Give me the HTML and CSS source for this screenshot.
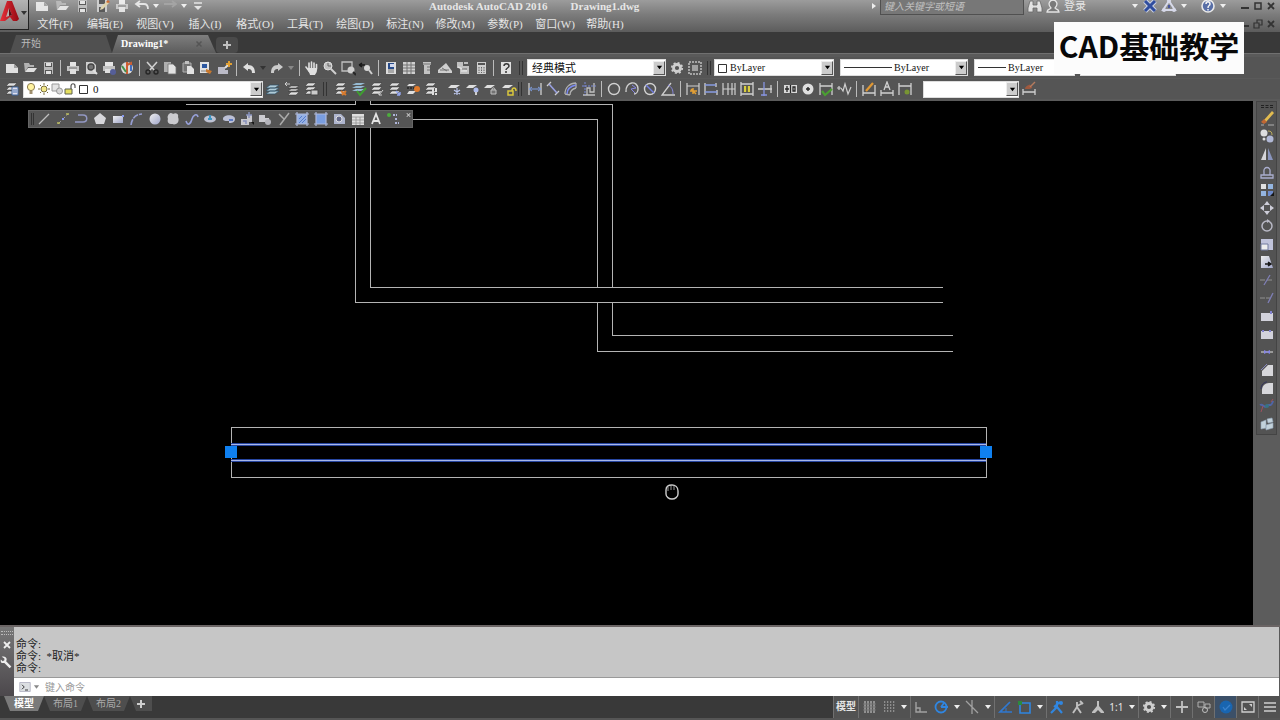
FILE: index.html
```html
<!DOCTYPE html>
<html lang="zh-CN">
<head>
<meta charset="utf-8">
<title>Autodesk AutoCAD 2016 - Drawing1.dwg</title>
<link rel="stylesheet" href="styles.css">
</head>
<body>
<svg class="sprite" aria-hidden="true">
  <defs>
    <linearGradient id="red" x1="0" x2="1"><stop offset="0" stop-color="#e8303a"/><stop offset="1" stop-color="#940a12"/></linearGradient>
    <linearGradient id="pale" x1="0" y1="0" x2="1" y2="1"><stop offset="0" stop-color="#fff"/><stop offset="1" stop-color="#a9b0d8"/></linearGradient>
  </defs>
  <symbol id="new" viewBox="0 0 16 16"><path d="M2 4h8l4 4v5H2z" fill="#f0f0f0"/><path d="M10 4v4h4z" fill="#a8a8a8"/></symbol>
  <symbol id="open" viewBox="0 0 16 16"><path d="M2 3h5l1 2h4v2H6l-3 5z" fill="#bdbdbd"/><path d="M6 8h9l-3 4H3z" fill="#eee"/></symbol>
  <symbol id="save" viewBox="0 0 16 16"><path d="M4 2h9v12H4z" fill="#c4c4c4"/><path d="M5 3h7v4H5zM5 10h7v4H5z" fill="#555"/><path d="M6 3h5v3H6zM6 11h5v3H6z" fill="#eee"/></symbol>
  <symbol id="saveas" viewBox="0 0 16 16"><path d="M3 2h10v12H3z" fill="#d4d4d4"/><path d="M5 2h6v4H5zM5 9h6v5H5z" fill="#555"/><path d="M7 9l6-6 2 2-6 6-3 1z" fill="#e8dcb0"/><path d="M12 4l2-2 2 2-2 1z" fill="#d86a2a"/></symbol>
  <symbol id="print" viewBox="0 0 16 16"><path d="M5 2h6v4H5z" fill="#f5f5f5"/><path d="M2 6h12v5H2z" fill="#cfcfcf"/><path d="M5 9h6v5H5z" fill="#eee"/><path d="M4 8h8" stroke="#777"/></symbol>
  <symbol id="preview" viewBox="0 0 16 16"><path d="M3 2h7l3 3v9H3z" fill="#ddd"/><circle cx="8" cy="7" r="3" fill="#777" stroke="#444" stroke-width="1.4"/><path d="M10 10l4 4" stroke="#eee" stroke-width="2"/></symbol>
  <symbol id="publish" viewBox="0 0 16 16"><path d="M4 2h8v4H4z" fill="#f5f5f5"/><path d="M2 6h12v5H2z" fill="#ccc"/><path d="M4 9h6v4H4z" fill="#eee"/><circle cx="12" cy="12" r="3" fill="#5560a0"/></symbol>
  <symbol id="globe" viewBox="0 0 16 16"><circle cx="8" cy="8" r="6" fill="#e8e8e8"/><path d="M8 2v12M8 5l4-2v8" stroke="#d86030" stroke-width="2" fill="none"/><path d="M3 6l4 6" stroke="#3f9a4a" stroke-width="2"/><path d="M12 5v6" stroke="#4170c8" stroke-width="2"/></symbol>
  <symbol id="cut" viewBox="0 0 16 16"><path d="M3 2l8 9M13 2l-8 9" stroke="#ddd" stroke-width="1.6"/><circle cx="4" cy="12" r="2" fill="none" stroke="#222" stroke-width="1.4"/><circle cx="12" cy="12" r="2" fill="none" stroke="#222" stroke-width="1.4"/></symbol>
  <symbol id="copy" viewBox="0 0 16 16"><path d="M2 2h7v10H2z" fill="#b8b8b8"/><path d="M6 4h5l3 3v7H6z" fill="#f2f2f2" stroke="#777" stroke-width=".8"/></symbol>
  <symbol id="paste" viewBox="0 0 16 16"><path d="M3 3h8v9H3z" fill="#777" stroke="#bbb"/><path d="M5 1h4v3H5z" fill="#ccc"/><path d="M7 6h4l3 3v5H7z" fill="#f2f2f2"/></symbol>
  <symbol id="match" viewBox="0 0 16 16"><path d="M2 2h9v11H2z" fill="#f2f2f2"/><path d="M4 4h5v4H4z" fill="#2858a8"/><path d="M3 11h6" stroke="#888"/><path d="M8 9l6 2-2 3-4-2z" fill="#d47c2a"/></symbol>
  <symbol id="block" viewBox="0 0 16 16"><path d="M2 7h7v3h3v4H2z" fill="#c6c6d4"/><path d="M9 8l3-3" stroke="#eee" stroke-width="2"/><path d="M13 1v6M10 4h6" stroke="#f0a830" stroke-width="2"/></symbol>
  <symbol id="undo" viewBox="0 0 16 16"><path d="M2 7l5-4v2c5 0 7 3 7 8h-3c0-3-1-4-4-4v2z" fill="#eee"/></symbol>
  <symbol id="redo" viewBox="0 0 16 16"><path d="M14 7L9 3v2c-5 0-7 3-7 8h3c0-3 1-4 4-4v2z" fill="#d8d8d8"/></symbol>
  <symbol id="undo2" viewBox="0 0 16 16"><path d="M6 3L2 6l4 3M3 6h7c3 0 4 2 4 5" fill="none" stroke="#eee" stroke-width="1.8"/></symbol>
  <symbol id="redo2" viewBox="0 0 16 16"><path d="M10 3l4 3-4 3M13 6H2" fill="none" stroke="#a6a6a6" stroke-width="1.8"/></symbol>
  <symbol id="caret" viewBox="0 0 8 8"><path d="M1 2h6L4 6z" fill="currentColor"/></symbol>
  <symbol id="qatmore" viewBox="0 0 16 16"><path d="M4 5h8" stroke="#eee" stroke-width="1.5"/><path d="M4 8h8l-4 4z" fill="#eee"/></symbol>
  <symbol id="hand" viewBox="0 0 16 16"><path d="M5 8V3M7.500 8V2M10 8V3M12.500 9V4.500M2 7l3 4" stroke="#f0f0f0" stroke-width="1.6" stroke-linecap="round"/><path d="M4 8h9v2c0 3-2 4-2 5H6c0-2-2-3-2-5z" fill="#f0f0f0"/></symbol>
  <symbol id="zoomrt" viewBox="0 0 16 16"><circle cx="6" cy="6" r="4" fill="#ccc" stroke="#eee"/><path d="M6 3v3h3" stroke="#666" fill="none"/><path d="M9 9l5 5" stroke="#ddd" stroke-width="2"/></symbol>
  <symbol id="zoomwin" viewBox="0 0 16 16"><path d="M2 2h10v9H2z" fill="none" stroke="#ccc" stroke-width="1.3"/><circle cx="11" cy="10" r="3.500" fill="#ddd"/><path d="M13 12l3 3" stroke="#222" stroke-width="2"/></symbol>
  <symbol id="zoomprev" viewBox="0 0 16 16"><path d="M1 5h6M1 5l3-2M1 5l3 2" stroke="#111" stroke-width="1.4"/><circle cx="9" cy="8" r="3" fill="#e4e4e4"/><path d="M11 10l3 4" stroke="#ddd" stroke-width="2"/></symbol>
  <symbol id="props" viewBox="0 0 16 16"><path d="M3 2h10v12H3z" fill="#ececec"/><path d="M5 3h6v6H5z" fill="#234a90"/><path d="M7 4h4v3H7z" fill="#dfe7ff"/><path d="M5 10h6M5 12h6" stroke="#777"/></symbol>
  <symbol id="design" viewBox="0 0 16 16"><path d="M2 2h12v12H2z" fill="#ddd"/><path d="M6 2v12M10 2v12M2 5h12M2 8h12M2 11h12" stroke="#777"/></symbol>
  <symbol id="palette" viewBox="0 0 16 16"><path d="M4 2h8v3h-1v9H5V5H4z" fill="#d0d0d0"/><path d="M4 4h8M8 7h3M8 10h3" stroke="#777"/></symbol>
  <symbol id="sheet" viewBox="0 0 16 16"><path d="M1 10l8-7 3 4 3 4v2H1z" fill="#ddd"/><path d="M3 10h9M5 8l5 3" stroke="#777"/></symbol>
  <symbol id="markup" viewBox="0 0 16 16"><path d="M2 2h6v4h6v8H5V8H2z" fill="#ccc"/><path d="M9 3h4M3 7l9 4M6 11h6" stroke="#eee" stroke-width="1.5"/><path d="M7 9h5" stroke="#666"/></symbol>
  <symbol id="calc" viewBox="0 0 16 16"><path d="M4 2h9v12H4z" fill="#ddd"/><path d="M5 4h7" stroke="#555" stroke-width="2"/><path d="M6 7v6M8.500 7v6M11 7v6" stroke="#666" stroke-dasharray="1.500 1"/></symbol>
  <symbol id="help" viewBox="0 0 16 16"><path d="M3 2h10v12H3z" fill="#eee"/><path d="M6 6c0-3 5-3 5 0 0 2-3 2-3 4M8 11v2" fill="none" stroke="#333" stroke-width="1.5"/></symbol>
  <symbol id="gear" viewBox="0 0 16 16"><circle cx="8" cy="8" r="3.500" fill="none" stroke="#ddd" stroke-width="2.800"/><circle cx="8" cy="8" r="5.200" fill="none" stroke="#ddd" stroke-width="1.800" stroke-dasharray="2 2.080"/></symbol>
  <symbol id="wsave" viewBox="0 0 16 16"><path d="M2 2h12v12H2z" fill="none" stroke="#ccc" stroke-width="1.500" stroke-dasharray="2 1"/><path d="M5 5h6v6H5z" fill="#aaa"/></symbol>
  <symbol id="layers" viewBox="0 0 16 16"><path d="M5 2h8l-3 3H2zM5 6h8l-3 3H2zM5 10h8l-3 3H2z" fill="#eee" stroke="#333" stroke-width=".5"/></symbol>
  <symbol id="layprop" viewBox="0 0 16 16"><use href="#layers"/><path d="M8 6h6v8H8z" fill="#eef" stroke="#3c69a5"/><path d="M9 9h4M9 11h4" stroke="#4a78b8"/></symbol>
  <symbol id="laycur" viewBox="0 0 16 16"><path d="M5 4h9l-4 3H1zM5 7h9l-4 3H1zM5 10h9l-4 3H1z" fill="#b9d8e6" stroke="#2c5068" stroke-width=".7"/></symbol>
  <symbol id="layprev" viewBox="0 0 16 16"><path d="M7 5h8l-3 2H4zM7 8h8l-3 2H4zM7 11h8l-3 3H4z" fill="#eee" stroke="#333" stroke-width=".5"/><path d="M1 3h5M1 3l2-2M1 3l2 2" stroke="#ddd"/></symbol>
  <symbol id="laystate" viewBox="0 0 16 16"><use href="#layers"/><path d="M8 9h7v5H8z" fill="#d8d8d8" stroke="#444"/></symbol>
  <symbol id="layorange" viewBox="0 0 16 16"><use href="#layers"/><path d="M8 10l5 4M13 10l-4 4" stroke="#e8802a" stroke-width="2"/></symbol>
  <symbol id="laycheck" viewBox="0 0 16 16"><path d="M5 2h9l-4 2H1zM5 5h9l-4 2H1zM5 8h9l-4 2H1z" fill="#9cc5e0"/><path d="M6 10l3 4 6-7" fill="none" stroke="#3ca82c" stroke-width="2"/></symbol>
  <symbol id="layarrow" viewBox="0 0 16 16"><use href="#layers"/><path d="M14 9l-4 5M10 14v-3M10 14h3" stroke="#ddd"/></symbol>
  <symbol id="layblue" viewBox="0 0 16 16"><use href="#layers"/><path d="M9 10l4 4M13 14v-3M13 14h-3" stroke="#9cb0ff" stroke-width="1.400"/></symbol>
  <symbol id="layiso" viewBox="0 0 16 16"><path d="M4 3h7L8 5H2zM4 10h7l-3 3H2z" fill="#eee"/><path d="M2 7h8" stroke="#222" stroke-width="1.500" stroke-dasharray="2 1"/><circle cx="12" cy="8" r="3" fill="#f07f28"/></symbol>
  <symbol id="laywalk" viewBox="0 0 16 16"><use href="#layers"/><path d="M10 7v7M13 7v7" stroke="#eee" stroke-width="2" stroke-dasharray="4 1"/></symbol>
  <symbol id="layfrz" viewBox="0 0 16 16"><path d="M4 4h9l-4 3H1z" fill="#eee"/><path d="M10 7v7M7 9l6 4M13 9l-6 4" stroke="#c8d4ff" stroke-width="1.200"/></symbol>
  <symbol id="layoff" viewBox="0 0 16 16"><path d="M4 4h8l-4 3H1z" fill="#eee"/><circle cx="11" cy="9" r="2.500" fill="#b8c8ff"/><path d="M11 11v3" stroke="#ddd" stroke-width="2"/></symbol>
  <symbol id="laylock" viewBox="0 0 16 16"><path d="M4 4h8l-4 3H1z" fill="#eee"/><path d="M8 9h5v4H8zM9 9c0-3 3-3 3 0" fill="#777" stroke="#ccc"/></symbol>
  <symbol id="layunlock" viewBox="0 0 16 16"><path d="M4 4h8l-4 3H1z" fill="#eee"/><path d="M7 10h5v4H7zM11 10c0-4 4-4 4 0" fill="none" stroke="#e8d43a" stroke-width="1.500"/></symbol>
  <symbol id="bulb" viewBox="0 0 12 14"><circle cx="6" cy="5" r="3.600" fill="#fff3a0" stroke="#8a7a50"/><path d="M4.500 9h3v3h-3z" fill="#a09070"/></symbol>
  <symbol id="sun" viewBox="0 0 12 14"><circle cx="6" cy="7" r="3" fill="#f3e788" stroke="#7a7040"/><path d="M6 1v2M6 11v2M0 7h2M10 7h2M2 3l1 1M9 10l1 1M10 3L9 4M3 10l-1 1" stroke="#7a7040"/></symbol>
  <symbol id="vpfrz" viewBox="0 0 12 14"><path d="M1 2h7v7H1z" fill="#e4e4e4" stroke="#999"/><circle cx="8.500" cy="9" r="3" fill="#d8d8d8" stroke="#999"/></symbol>
  <symbol id="lock" viewBox="0 0 12 14"><path d="M1 7h7v5H1z" fill="#e6e060" stroke="#5c6050"/><path d="M7 7V4c0-3 4-3 4 0v2" fill="none" stroke="#555" stroke-width="1.200"/></symbol>
  <symbol id="swatch" viewBox="0 0 12 14"><path d="M2.500 3.500h8v8h-8z" fill="#fff" stroke="#333"/></symbol>
  <symbol id="dlin" viewBox="0 0 16 16"><path d="M2 2v12M14 2v12" stroke="#ddd" stroke-width="1.300"/><path d="M2 8h12M2 8l3-2M2 8l3 2M14 8l-3-2M14 8l-3 2" stroke="#86a8f0" fill="none"/></symbol>
  <symbol id="dali" viewBox="0 0 16 16"><path d="M2 5l4-4M10 14l4-4" stroke="#ddd" stroke-width="1.300"/><path d="M4 3l8 9" stroke="#a0a8f0" stroke-width="1.600"/></symbol>
  <symbol id="darc" viewBox="0 0 16 16"><path d="M2 13C2 6 7 2 13 2M7 14c0-4 2-6 6-7M2 13l5 1M13 2v5" fill="none" stroke="#bbb" stroke-width="1.300"/><path d="M4 13C4 8 8 5 13 4" fill="none" stroke="#8090ff" stroke-width="1.500"/></symbol>
  <symbol id="dord" viewBox="0 0 16 16"><path d="M2 14h12M6 14V7h3v4h4V2" fill="none" stroke="#ccc" stroke-width="1.300"/><path d="M1 5h14M4 1v13" stroke="#8090e8" stroke-dasharray="2 1"/></symbol>
  <symbol id="circ" viewBox="0 0 16 16"><circle cx="8" cy="8" r="5.500" fill="none" stroke="#e0e0e0" stroke-width="1.400"/></symbol>
  <symbol id="djog" viewBox="0 0 16 16"><path d="M2 11c-1-11 12-12 12-3 0 3-2 5-4 5" fill="none" stroke="#ddd" stroke-width="1.400"/><path d="M8 4l4 3-5 1 4 4" fill="none" stroke="#8c8cf0"/></symbol>
  <symbol id="ddia" viewBox="0 0 16 16"><use href="#circ"/><path d="M4 4l8 8" stroke="#7784f0" stroke-width="1.500"/></symbol>
  <symbol id="dang" viewBox="0 0 16 16"><path d="M15 14H2L11 2" fill="none" stroke="#ddd" stroke-width="1.300"/><path d="M8 4c4 2 5 5 5 9" stroke="#9090ee" fill="none"/></symbol>
  <symbol id="dquick" viewBox="0 0 16 16"><path d="M2 2v12M14 2v12M2 5h12" stroke="#ddd" stroke-width="1.200"/><path d="M8 7v6M5 10h7M6 8l5 5" stroke="#f2a832" stroke-width="1.500"/></symbol>
  <symbol id="dbase" viewBox="0 0 16 16"><path d="M2 2v12M13 2v4M14 9v5" stroke="#ddd" stroke-width="1.300"/><path d="M2 4h11M2 11h12" stroke="#8fa4f2" stroke-width="1.400"/></symbol>
  <symbol id="dcont" viewBox="0 0 16 16"><path d="M2 2v12M7 2v12M11 2v12M14 2v12M2 8h12" stroke="#ddd" stroke-width="1.200"/></symbol>
  <symbol id="dspace" viewBox="0 0 16 16"><path d="M2 1v14M14 1v14M2 3h12M2 13h12" stroke="#ddd" stroke-width="1.300"/><path d="M5 5h6v6H5z" fill="#e8dc3c"/><path d="M8 5v6" stroke="#444" stroke-width="1.500"/></symbol>
  <symbol id="dbreak" viewBox="0 0 16 16"><path d="M1 8h14M14 4v8" stroke="#ddd" stroke-width="1.300"/><path d="M7 1v14M4 14h6" stroke="#8d9cf0" stroke-width="1.300"/></symbol>
  <symbol id="tol" viewBox="0 0 16 16"><path d="M2 4h13v8H2z" fill="#e8e8e8"/><path d="M5 5v6M3 8h4M8.500 4v8M11 6h2v4h-2z" stroke="#222" fill="none" stroke-width="1.300"/></symbol>
  <symbol id="cmark" viewBox="0 0 16 16"><circle cx="8" cy="8" r="5.500" fill="#eee"/><path d="M8 6v4M6 8h4" stroke="#222" stroke-width="1.400"/></symbol>
  <symbol id="dinsp" viewBox="0 0 16 16"><path d="M2 2v12M14 2v12M2 5h12" stroke="#ddd" stroke-width="1.300"/><path d="M4 10l3 4 7-6" fill="none" stroke="#49a82e" stroke-width="2.200"/></symbol>
  <symbol id="djl" viewBox="0 0 16 16"><path d="M1 7h4M3 5v4M5 7l2 3 2-7 3 10 3-7" fill="none" stroke="#ddd" stroke-width="1.200"/></symbol>
  <symbol id="dedit" viewBox="0 0 16 16"><path d="M2 4v11M14 4v11M2 12h12" stroke="#ddd" stroke-width="1.300"/><path d="M5 10l7-8" stroke="#f0a030" stroke-width="2.200"/></symbol>
  <symbol id="dtext" viewBox="0 0 16 16"><path d="M2 9v6M14 9v6M2 12h12M5 9l3-8 3 8M6 6h4" fill="none" stroke="#ddd" stroke-width="1.300"/></symbol>
  <symbol id="dupd" viewBox="0 0 16 16"><path d="M2 2v12M14 2v12M2 5h12" stroke="#ddd" stroke-width="1.300"/><circle cx="10" cy="11" r="2.500" fill="#7c9c30"/></symbol>
  <symbol id="dstyle" viewBox="0 0 16 16"><path d="M2 8v6M14 8v6M2 11h12" stroke="#ddd" stroke-width="1.300"/><path d="M6 8c0-2 3-2 4-3" stroke="#a85a3c" stroke-width="4" fill="none"/><path d="M9 6l5-5" stroke="#c08060" stroke-width="1.500"/></symbol>
  <symbol id="line" viewBox="0 0 16 16"><path d="M3 13L13 3" stroke="#ccc" stroke-width="1.300"/></symbol>
  <symbol id="xline" viewBox="0 0 16 16"><path d="M3 13L13 3" stroke="#aaa" stroke-dasharray="4 2"/><path d="M2 12h3M11 3h3" stroke="#c8c860" stroke-width="1.500"/><path d="M7 7h2v2H7z" fill="#8da0ff"/></symbol>
  <symbol id="pline" viewBox="0 0 16 16"><path d="M5 4h5c5 0 5 7 0 7H2" fill="none" stroke="#9aa0d0" stroke-width="1.500"/></symbol>
  <symbol id="poly" viewBox="0 0 16 16"><path d="M8 2l6 5-2 6H4L2 7z" fill="#e6e6ea"/></symbol>
  <symbol id="rect" viewBox="0 0 16 16"><path d="M3 5h10v7H3z" fill="url(#pale)"/><path d="M12 4h2v2h-2z" fill="#8da0ff"/></symbol>
  <symbol id="arc" viewBox="0 0 16 16"><path d="M2 14C3 7 7 3 13 3" fill="none" stroke="#9ea6e0" stroke-width="1.600" stroke-dasharray="6 1"/></symbol>
  <symbol id="disc" viewBox="0 0 16 16"><circle cx="8" cy="8" r="5.500" fill="url(#pale)"/></symbol>
  <symbol id="cloud" viewBox="0 0 16 16"><path d="M4 3c2-2 4 0 4 0 3-2 6 0 5 3 1 2 1 6-2 7-2 1-4 0-5 0-3 0-4-3-3-5-1-2 0-4 1-5z" fill="#d7d7dc"/></symbol>
  <symbol id="spline" viewBox="0 0 16 16"><path d="M2 10c2 6 5 2 6-2s5-6 6-2" fill="none" stroke="#a0aae8" stroke-width="1.600"/></symbol>
  <symbol id="ellipse" viewBox="0 0 16 16"><ellipse cx="8" cy="8" rx="6" ry="3.500" fill="#c9cee2"/><path d="M6 8h4M8 4v3" stroke="#3c9acc" stroke-width="2"/></symbol>
  <symbol id="earc" viewBox="0 0 16 16"><path d="M2 8c0-5 12-5 12 0 0 4-4 4-6 4v-2C5 10 2 10 2 8z" fill="#c8cce4"/><path d="M8 9h4" stroke="#6080d0" stroke-width="2"/></symbol>
  <symbol id="insert" viewBox="0 0 16 16"><path d="M2 8h6V4h5v7h-3v3H2z" fill="#d4d4da"/><path d="M10 1v6M7 4h6M4 10h3v3" stroke="#8d98c8" stroke-width="1.500" fill="none"/><path d="M12 11h3v3" fill="#111"/></symbol>
  <symbol id="mkblock" viewBox="0 0 16 16"><path d="M2 4h6v3h4v4H2z" fill="#d8d8de"/><circle cx="11" cy="11" r="3" fill="#c0c0c8"/></symbol>
  <symbol id="point" viewBox="0 0 16 16"><path d="M3 3l5 5M13 2L4 14" stroke="#b4b4b4" stroke-width="1.500"/></symbol>
  <symbol id="hatch" viewBox="0 0 16 16"><path d="M3 3h10v10H3z" fill="#9cbcf4"/><path d="M3 1v14M13 1v14M1 3h14M1 13h14" stroke="#b8c4e8" stroke-width="1.200"/><path d="M5 8l3-3M5 12l7-7M8 12l4-4" stroke="#5580d8"/></symbol>
  <symbol id="gradient" viewBox="0 0 16 16"><path d="M3 3h10v10H3z" fill="#7fa6f0"/><path d="M3 1v14M13 1v14M1 3h14M1 13h14" stroke="#b8c4e8" stroke-width="1.200"/></symbol>
  <symbol id="region" viewBox="0 0 16 16"><path d="M3 3h7l4 4v6H3z" fill="#b8c0dc"/><circle cx="8" cy="8" r="3" fill="#666c90" stroke="#eee"/></symbol>
  <symbol id="table" viewBox="0 0 16 16"><path d="M2 3h12v11H2z" fill="#eee"/><path d="M2 6h12M2 9h12M2 12h12M6 6v8M10 6v8" stroke="#999" stroke-width=".8"/></symbol>
  <symbol id="mtext" viewBox="0 0 16 16"><path d="M4 13L8 3l4 10M5 10h6" fill="none" stroke="#f4f4f4" stroke-width="1.800"/></symbol>
  <symbol id="addsel" viewBox="0 0 16 16"><circle cx="3" cy="4" r="2" fill="#4cb83a"/><path d="M7 4h4M10 7v3M9 12h4" stroke="#b8c0e8" stroke-dasharray="2 1" fill="none" stroke-width="2"/></symbol>
  <symbol id="erase" viewBox="0 0 16 16"><path d="M5 10l8-9 2 2-8 9z" fill="#f2c850"/><path d="M2 12l3-3 3 3-3 2z" fill="#cc6a30"/><path d="M2 15h3M9 15h6" stroke="#bbb"/></symbol>
  <symbol id="mcopy" viewBox="0 0 16 16"><circle cx="5" cy="5" r="3.500" fill="#eee"/><circle cx="11" cy="11" r="3.500" fill="#bcc4e4"/><path d="M9 3c3 0 4 1 4 4" stroke="#c8b860" fill="none"/><circle cx="5" cy="11" r="1.500" fill="#eee"/></symbol>
  <symbol id="mirror" viewBox="0 0 16 16"><path d="M7 2v12H2z" fill="#e4e4e8"/><path d="M9 2v12h5z" fill="#8f9cc8"/></symbol>
  <symbol id="offset" viewBox="0 0 16 16"><path d="M2 14h12v-3h-3V8c1-6-7-6-6 0v3H2zM2 11h12" fill="none" stroke="#b4b8dc" stroke-width="1.300"/></symbol>
  <symbol id="array" viewBox="0 0 16 16"><path d="M2 2h5v5H2z" fill="#f0f0f0"/><path d="M9 2h5v5H9zM2 9h5v5H2z" fill="#9cc0f0"/><path d="M9 9h5v5H9z" fill="#7090d8"/><path d="M11 14l4-4v4z" fill="#111"/></symbol>
  <symbol id="move" viewBox="0 0 16 16"><path d="M8 1l3 4H5zM8 15l3-4H5zM1 8l4-3v6zM15 8l-4-3v6z" fill="#dcdce8"/></symbol>
  <symbol id="rotate" viewBox="0 0 16 16"><circle cx="8" cy="8" r="5" fill="none" stroke="#c4c4d2" stroke-width="1.500"/><path d="M8 1l3 2-3 2z" fill="#c4c4d2"/></symbol>
  <symbol id="scale" viewBox="0 0 16 16"><path d="M2 3h12v11H2z" fill="#ccd0ea"/><path d="M2 8h7v6H2z" fill="#fff" stroke="#7780a8"/></symbol>
  <symbol id="stretch" viewBox="0 0 16 16"><path d="M2 2h8l4 12H2z" fill="url(#pale)"/><path d="M6 10h5M9 8l3 2-3 2" stroke="#111" stroke-width="1.500" fill="#111"/></symbol>
  <symbol id="trim" viewBox="0 0 16 16"><path d="M1 8h14" stroke="#999" stroke-dasharray="5 2"/><path d="M5 13l6-10" stroke="#8484c0" stroke-width="1.300"/></symbol>
  <symbol id="extend" viewBox="0 0 16 16"><path d="M1 8h10" stroke="#999" stroke-dasharray="5 1"/><path d="M9 13l5-10" stroke="#8484c0" stroke-width="1.300"/></symbol>
  <symbol id="brkpt" viewBox="0 0 16 16"><path d="M2 5h12v8H2z" fill="#e0e0ea"/><path d="M11 3h2v3h-2z" fill="#8888dc"/></symbol>
  <symbol id="brk" viewBox="0 0 16 16"><path d="M2 5h12v8H2z" fill="#e0e0ea"/><path d="M3 4h2v2H3zM10 4h2v2h-2z" fill="#8888dc"/></symbol>
  <symbol id="join" viewBox="0 0 16 16"><path d="M2 8h12" stroke="#ccc" stroke-width="1.300"/><path d="M5 6l4 2-4 2zM11 6L7 8l4 2z" fill="#8c8cf0"/></symbol>
  <symbol id="chamfer" viewBox="0 0 16 16"><path d="M3 9l6-6h5v11H3z" fill="#e6e6ea"/><path d="M2 8l6-6" stroke="#8c8cc8"/></symbol>
  <symbol id="fillet" viewBox="0 0 16 16"><path d="M3 14V10c0-4 3-7 7-7h4v11z" fill="#e6e6ea"/><path d="M2 9c0-4 3-7 6-7" fill="none" stroke="#303060"/></symbol>
  <symbol id="blend" viewBox="0 0 16 16"><path d="M1 7c3-2 4 4 7 1s4 2 6-5" fill="none" stroke="#5068b0" stroke-width="2"/><path d="M2 14l2-6M12 4l2-3" stroke="#a85060"/><circle cx="8" cy="8" r="2" fill="#357888"/></symbol>
  <symbol id="explode" viewBox="0 0 16 16"><path d="M2 6l5-2v8l-5 1zM8 3l5-1 1 4-5 1zM7 9l7-2v5l-7 2z" fill="#cfe0ea" stroke="#9ab0c4" stroke-width=".6"/></symbol>
  <symbol id="plus" viewBox="0 0 16 16"><path d="M8 4v8M4 8h8" stroke="currentColor" stroke-width="2"/></symbol>
  <symbol id="bigplus" viewBox="0 0 16 16"><path d="M8 2v12M2 8h12" stroke="#ccc" stroke-width="1.800"/></symbol>
  <symbol id="bino" viewBox="0 0 16 16"><path d="M3 3h3v4h4V3h3l2 7v4h-5v-4H6v4H1v-4z" fill="#ececec" stroke="#666" stroke-width=".8"/></symbol>
  <symbol id="person" viewBox="0 0 16 16"><path d="M2 14c0-3 4-3 4-4-4-4-1-8 2-8s6 4 2 8c0 1 4 1 4 4z" fill="#777" stroke="#eee" stroke-width="1.300"/></symbol>
  <symbol id="exch" viewBox="0 0 16 16"><path d="M3 3l10 10M13 3L3 13" stroke="#d4dcf0" stroke-width="5"/><path d="M3 3l10 10M13 3L3 13" stroke="#2747a0" stroke-width="3"/></symbol>
  <symbol id="a360" viewBox="0 0 16 16"><path d="M8 3l6 9H2z" fill="none" stroke="#dfe2f4" stroke-width="2"/><circle cx="8" cy="3" r="2" fill="#dfe2f4"/><circle cx="3" cy="12" r="2" fill="#dfe2f4"/><circle cx="13" cy="12" r="2" fill="#dfe2f4"/><path d="M8 7v3" stroke="#4050a0" stroke-width="2"/></symbol>
  <symbol id="qhelp" viewBox="0 0 16 16"><circle cx="8" cy="8" r="6" fill="#536caa" stroke="#f4f4f4" stroke-width="1.600"/><path d="M6 6c0-3 4-3 4 0 0 2-2 1-2 4M8 11v1.500" fill="none" stroke="#fff" stroke-width="1.500"/></symbol>
  <symbol id="min" viewBox="0 0 12 12"><path d="M2 8h8" stroke="#333" stroke-width="2"/></symbol>
  <symbol id="max" viewBox="0 0 12 12"><path d="M3 3h6v6H3z" fill="none" stroke="#333" stroke-width="1.500"/></symbol>
  <symbol id="restore" viewBox="0 0 12 12"><path d="M2 5h5v5H2zM5 5V2h5v5H7" fill="none" stroke="#333" stroke-width="1.200"/></symbol>
  <symbol id="close" viewBox="0 0 12 12"><path d="M3 3l6 6M9 3L3 9" stroke="currentColor" stroke-width="1.800"/></symbol>
  <symbol id="wrench" viewBox="0 0 16 16"><path d="M2 2c4-1 7 2 5 5l6 6-2 2-6-6c-3 1-5-1-4-4l2 2 2-1 0-2z" fill="#eee"/></symbol>
  <symbol id="grid1" viewBox="0 0 16 16"><path d="M4 2v12M7 2v12M10 2v12M13 2v12" stroke="#ddd"/><path d="M2 5h13M2 8h13M2 11h13" stroke="#777"/></symbol>
  <symbol id="grid2" viewBox="0 0 16 16"><path d="M3 3h11M3 6h11M3 9h11M3 12h11" stroke="#aaa" stroke-dasharray="1.300 1.700" stroke-width="1.300"/></symbol>
  <symbol id="ortho" viewBox="0 0 16 16"><path d="M3 3v10h11M3 9h4v4" fill="none" stroke="#aaa" stroke-width="1.400"/></symbol>
  <symbol id="polar" viewBox="0 0 16 16"><circle cx="8" cy="8" r="5.500" fill="none" stroke="#2d8cf0" stroke-width="1.800"/><path d="M8 8h7M8 8l3-4" stroke="#2d8cf0" stroke-width="1.800"/></symbol>
  <symbol id="iso" viewBox="0 0 16 16"><path d="M2 2l12 12M8 1v14" stroke="#aaa" stroke-width="1.300"/></symbol>
  <symbol id="otrack" viewBox="0 0 16 16"><path d="M13 3L3 13h12" fill="none" stroke="#2d7ee0" stroke-width="1.700"/><path d="M9 9v4" stroke="#2d7ee0"/></symbol>
  <symbol id="osnap" viewBox="0 0 16 16"><path d="M3 4h10v10H3z" fill="none" stroke="#2d8cf0" stroke-width="1.600"/><path d="M1 2h4v4H1z" fill="#28913a"/></symbol>
  <symbol id="ann1" viewBox="0 0 16 16"><path d="M8 2v7M8 8l-6 6M8 8l5 6M5 8l6-5" stroke="#2d8cf0" stroke-width="2.200"/><circle cx="12" cy="4" r="2" fill="#2d8cf0"/></symbol>
  <symbol id="ann2" viewBox="0 0 16 16"><path d="M7 3v6M7 8l-4 6M7 8l4 6M7 7l6-3M10 2l3 3" stroke="#ccc" stroke-width="1.900"/></symbol>
  <symbol id="ann3" viewBox="0 0 16 16"><path d="M7 2h2v5l5 6v1h-3L8 11l-3 3H2v-1l5-6z" fill="#ccc"/></symbol>
  <symbol id="monitor" viewBox="0 0 16 16"><path d="M2 3h6v5H2z" fill="none" stroke="#bbb"/><path d="M9 5h5v4H9z" fill="none" stroke="#bbb"/><circle cx="9" cy="11" r="2.500" fill="none" stroke="#ccc"/></symbol>
  <symbol id="perf" viewBox="0 0 16 16"><circle cx="8" cy="8" r="6.500" fill="#1668b8"/><path d="M5 8l2 3 5-5" fill="none" stroke="#3a88d8" stroke-width="1.300"/></symbol>
  <symbol id="full" viewBox="0 0 16 16"><path d="M2 3h12v10H2z" fill="none" stroke="#ddd" stroke-width="1.300"/><path d="M4 8v3h3zM12 8V5H9z" fill="#ddd"/></symbol>
  <symbol id="menu" viewBox="0 0 16 16"><path d="M2 4h12M2 8h12M2 12h12" stroke="#ddd" stroke-width="1.700"/></symbol>
  <symbol id="prompt" viewBox="0 0 16 16"><path d="M1 2h14v12H1z" fill="#dcdfe2" stroke="#aab"/><path d="M4 5l3 3-3 3M8 12h4" fill="none" stroke="#333" stroke-width="1.300"/></symbol>
</svg>

<div class="app">
  <header class="header">
    <button class="app-button" aria-label="应用程序菜单">
      <svg class="logo" viewBox="0 0 20 22"><path d="M7 1h5l7 18-2 2h-4l-3-4-5 4H0z" fill="url(#red)"/><path d="M9 8l3 7-6 2z" fill="#b8b0b0"/><path d="M9 8l3 7-3 1z" fill="#5c0a10"/></svg>
      <svg class="tiny dark"><use href="#caret"/></svg>
    </button>
    <div class="header-rows">
      <div class="title-row">
        <div class="qat">
          <button aria-label="新建"><svg class="ic"><use href="#new"/></svg></button>
          <button aria-label="打开"><svg class="ic"><use href="#open"/></svg></button>
          <button aria-label="保存"><svg class="ic"><use href="#save"/></svg></button>
          <button aria-label="另存为"><svg class="ic"><use href="#saveas"/></svg></button>
          <button aria-label="打印"><svg class="ic"><use href="#print"/></svg></button>
          <button aria-label="放弃"><svg class="ic"><use href="#undo2"/></svg></button>
          <svg class="tiny"><use href="#caret"/></svg>
          <button aria-label="重做"><svg class="ic"><use href="#redo2"/></svg></button>
          <svg class="tiny"><use href="#caret"/></svg>
          <button aria-label="自定义"><svg class="ic"><use href="#qatmore"/></svg></button>
        </div>
        <h1 class="title"><span>Autodesk AutoCAD 2016</span><span>Drawing1.dwg</span></h1>
        <svg class="tiny expand"><use href="#caret"/></svg>
        <input class="search" type="text" placeholder="键入关键字或短语" aria-label="搜索">
        <div class="account">
          <button aria-label="查找"><svg class="ic"><use href="#bino"/></svg></button>
          <button class="login"><svg class="ic"><use href="#person"/></svg>登录</button>
        </div>
        <div class="services">
          <svg class="tiny"><use href="#caret"/></svg>
          <button aria-label="Exchange"><svg class="ic"><use href="#exch"/></svg></button>
          <button aria-label="A360"><svg class="ic"><use href="#a360"/></svg></button>
          <svg class="tiny"><use href="#caret"/></svg>
        </div>
        <div class="services">
          <button aria-label="帮助"><svg class="ic"><use href="#qhelp"/></svg></button>
          <svg class="tiny"><use href="#caret"/></svg>
        </div>
        <div class="win">
          <button aria-label="最小化"><svg><use href="#min"/></svg></button>
          <button aria-label="最大化"><svg><use href="#max"/></svg></button>
          <button aria-label="关闭"><svg><use href="#close"/></svg></button>
        </div>
      </div>
      <nav class="menu-row">
        <button>文件(F)</button><button>编辑(E)</button><button>视图(V)</button><button>插入(I)</button><button>格式(O)</button><button>工具(T)</button><button>绘图(D)</button><button>标注(N)</button><button>修改(M)</button><button>参数(P)</button><button>窗口(W)</button><button>帮助(H)</button>
        <div class="win">
          <button aria-label="最小化图形"><svg><use href="#min"/></svg></button>
          <button aria-label="还原图形"><svg><use href="#restore"/></svg></button>
          <button aria-label="关闭图形"><svg><use href="#close"/></svg></button>
        </div>
      </nav>
    </div>
    <div class="banner">CAD基础教学</div>
  </header>

  <div class="file-tabs">
    <button class="file-tab">开始</button>
    <button class="file-tab active">Drawing1*<svg class="tabx"><use href="#close"/></svg></button>
    <button class="add-tab" aria-label="新图形"><svg class="ic"><use href="#plus"/></svg></button>
  </div>

  <div class="toolbars">
    <div class="bar">
      <div class="tools standard">
        <button aria-label="新建"><svg class="ic"><use href="#new"/></svg></button>
        <button aria-label="打开"><svg class="ic"><use href="#open"/></svg></button>
        <button aria-label="保存"><svg class="ic"><use href="#save"/></svg></button>
        <i class="sep"></i>
        <button aria-label="打印"><svg class="ic"><use href="#print"/></svg></button>
        <button aria-label="打印预览"><svg class="ic"><use href="#preview"/></svg></button>
        <button aria-label="发布"><svg class="ic"><use href="#publish"/></svg></button>
        <button aria-label="三维打印"><svg class="ic"><use href="#globe"/></svg></button>
        <i class="sep"></i>
        <button aria-label="剪切"><svg class="ic"><use href="#cut"/></svg></button>
        <button aria-label="复制"><svg class="ic"><use href="#copy"/></svg></button>
        <button aria-label="粘贴"><svg class="ic"><use href="#paste"/></svg></button>
        <button aria-label="特性匹配"><svg class="ic"><use href="#match"/></svg></button>
        <button aria-label="块编辑器"><svg class="ic"><use href="#block"/></svg></button>
        <i class="sep"></i>
        <button aria-label="放弃"><svg class="ic"><use href="#undo"/></svg></button>
        <svg class="tiny dark"><use href="#caret"/></svg>
        <button aria-label="重做"><svg class="ic"><use href="#redo"/></svg></button>
        <svg class="tiny dim"><use href="#caret"/></svg>
        <i class="sep"></i>
        <button aria-label="平移"><svg class="ic"><use href="#hand"/></svg></button>
        <button aria-label="实时缩放"><svg class="ic"><use href="#zoomrt"/></svg></button>
        <button aria-label="窗口缩放"><svg class="ic"><use href="#zoomwin"/></svg></button>
        <button aria-label="缩放上一个"><svg class="ic"><use href="#zoomprev"/></svg></button>
        <i class="sep"></i>
        <button aria-label="特性"><svg class="ic"><use href="#props"/></svg></button>
        <button aria-label="设计中心"><svg class="ic"><use href="#design"/></svg></button>
        <button aria-label="工具选项板"><svg class="ic"><use href="#palette"/></svg></button>
        <button aria-label="图纸集"><svg class="ic"><use href="#sheet"/></svg></button>
        <button aria-label="标记集"><svg class="ic"><use href="#markup"/></svg></button>
        <button aria-label="计算器"><svg class="ic"><use href="#calc"/></svg></button>
        <i class="sep"></i>
        <button aria-label="帮助"><svg class="ic"><use href="#help"/></svg></button>
      </div>
      <i class="grip"></i>
      <div class="combo space"><select aria-label="工作空间"><option>经典模式</option></select><span class="arrow"><svg><use href="#caret"/></svg></span></div>
      <div class="tools">
        <button aria-label="工作空间设置"><svg class="ic"><use href="#gear"/></svg></button>
        <button aria-label="我的工作空间"><svg class="ic"><use href="#wsave"/></svg></button>
      </div>
      <i class="grip"></i>
      <div class="combo bylayer color"><svg class="mini"><use href="#swatch"/></svg><select aria-label="颜色"><option>ByLayer</option></select><span class="arrow"><svg><use href="#caret"/></svg></span></div>
      <div class="combo bylayer ltype"><span class="rule"></span><select aria-label="线型"><option>ByLayer</option></select><span class="arrow"><svg><use href="#caret"/></svg></span></div>
      <div class="combo bylayer lweight"><span class="rule short"></span><select aria-label="线宽"><option>ByLayer</option></select></div>
      <div class="combo plot"></div>
    </div>
    <div class="bar">
      <div class="tools"><button aria-label="图层特性"><svg class="ic"><use href="#layprop"/></svg></button></div>
      <div class="combo layer">
        <svg class="mini"><use href="#bulb"/></svg><svg class="mini"><use href="#sun"/></svg><svg class="mini"><use href="#vpfrz"/></svg><svg class="mini"><use href="#lock"/></svg><svg class="mini"><use href="#swatch"/></svg>
        <select aria-label="图层"><option>0</option></select><span class="arrow"><svg><use href="#caret"/></svg></span>
      </div>
      <div class="tools current">
        <button aria-label="置为当前"><svg class="ic"><use href="#laycur"/></svg></button>
        <button aria-label="上一个图层"><svg class="ic"><use href="#layprev"/></svg></button>
        <button aria-label="图层状态"><svg class="ic"><use href="#laystate"/></svg></button>
      </div>
      <i class="grip"></i>
      <div class="tools layers2">
        <button aria-label="图层匹配"><svg class="ic"><use href="#layorange"/></svg></button>
        <button aria-label="更改为当前图层"><svg class="ic"><use href="#laycheck"/></svg></button>
        <button aria-label="复制到图层"><svg class="ic"><use href="#layarrow"/></svg></button>
        <button aria-label="图层漫游"><svg class="ic"><use href="#layblue"/></svg></button>
        <button aria-label="图层隔离"><svg class="ic"><use href="#layiso"/></svg></button>
        <button aria-label="取消隔离"><svg class="ic"><use href="#laywalk"/></svg></button>
        <i class="sep"></i>
        <button aria-label="冻结"><svg class="ic"><use href="#layfrz"/></svg></button>
        <button aria-label="关闭图层"><svg class="ic"><use href="#layoff"/></svg></button>
        <button aria-label="锁定图层"><svg class="ic"><use href="#laylock"/></svg></button>
        <button aria-label="解锁图层"><svg class="ic"><use href="#layunlock"/></svg></button>
      </div>
      <i class="grip"></i>
      <div class="tools dims">
        <button aria-label="线性"><svg class="ic"><use href="#dlin"/></svg></button>
        <button aria-label="对齐"><svg class="ic"><use href="#dali"/></svg></button>
        <button aria-label="弧长"><svg class="ic"><use href="#darc"/></svg></button>
        <button aria-label="坐标"><svg class="ic"><use href="#dord"/></svg></button>
        <i class="sep"></i>
        <button aria-label="半径"><svg class="ic"><use href="#circ"/></svg></button>
        <button aria-label="折弯"><svg class="ic"><use href="#djog"/></svg></button>
        <button aria-label="直径"><svg class="ic"><use href="#ddia"/></svg></button>
        <button aria-label="角度"><svg class="ic"><use href="#dang"/></svg></button>
        <i class="sep"></i>
        <button aria-label="快速标注"><svg class="ic"><use href="#dquick"/></svg></button>
        <button aria-label="基线"><svg class="ic"><use href="#dbase"/></svg></button>
        <button aria-label="连续"><svg class="ic"><use href="#dcont"/></svg></button>
        <button aria-label="等距标注"><svg class="ic"><use href="#dspace"/></svg></button>
        <button aria-label="折断标注"><svg class="ic"><use href="#dbreak"/></svg></button>
        <i class="sep"></i>
        <button aria-label="公差"><svg class="ic"><use href="#tol"/></svg></button>
        <button aria-label="圆心标记"><svg class="ic"><use href="#cmark"/></svg></button>
        <button aria-label="检验"><svg class="ic"><use href="#dinsp"/></svg></button>
        <button aria-label="折弯线性"><svg class="ic"><use href="#djl"/></svg></button>
        <i class="sep"></i>
        <button aria-label="编辑标注"><svg class="ic"><use href="#dedit"/></svg></button>
        <button aria-label="编辑标注文字"><svg class="ic"><use href="#dtext"/></svg></button>
        <button aria-label="标注更新"><svg class="ic"><use href="#dupd"/></svg></button>
      </div>
      <div class="combo dimstyle"><select aria-label="标注样式"><option></option></select><span class="arrow"><svg><use href="#caret"/></svg></span></div>
      <div class="tools"><button aria-label="标注样式管理"><svg class="ic"><use href="#dstyle"/></svg></button></div>
    </div>
  </div>

  <main class="workspace">
    <div class="canvas">
      <svg class="drawing" viewBox="0 101 1253 524" width="1253" height="524">
        <g fill="none" stroke="#b4b4b4" shape-rendering="crispEdges">
          <path d="M186 104.500H355.500V101M370.500 101V104.500H612.500V287"/>
          <path d="M370.500 119.500H597.500V287"/>
          <path d="M355.500 119V302.500H943M370.500 119V287.500H943"/>
          <path d="M597.500 302V351.500H953M612.500 302V335.500H953"/>
          <path d="M231.500 427.500H986.500V477.500H231.500Z"/>
        </g>
        <path d="M231 444.500H986M231 460.500H986" stroke="#2746a0" stroke-width="3"/>
        <path d="M231 444.500H986M231 460.500H986" stroke="#a8b6e8" stroke-width="1"/>
        <path d="M225 446h12v12h-12zM980 446h12v12h-12z" fill="#0f80f0"/>
        <g fill="none" stroke="#ccc">
          <path d="M666 490c0-4 3-5 6-5s6 2 6 6v3c0 3-3 5-6 5s-6-2-6-5z" stroke-width="1.400"/>
          <path d="M668 491v-4M671 490v-4M674 490v-4" stroke="#999"/>
        </g>
      </svg>
      <div class="draw-bar">
        <i class="grip"></i>
        <button aria-label="直线"><svg class="ic"><use href="#line"/></svg></button>
        <button aria-label="构造线"><svg class="ic"><use href="#xline"/></svg></button>
        <button aria-label="多段线"><svg class="ic"><use href="#pline"/></svg></button>
        <button aria-label="多边形"><svg class="ic"><use href="#poly"/></svg></button>
        <button aria-label="矩形"><svg class="ic"><use href="#rect"/></svg></button>
        <button aria-label="圆弧"><svg class="ic"><use href="#arc"/></svg></button>
        <button aria-label="圆"><svg class="ic"><use href="#disc"/></svg></button>
        <button aria-label="修订云线"><svg class="ic"><use href="#cloud"/></svg></button>
        <button aria-label="样条曲线"><svg class="ic"><use href="#spline"/></svg></button>
        <button aria-label="椭圆"><svg class="ic"><use href="#ellipse"/></svg></button>
        <button aria-label="椭圆弧"><svg class="ic"><use href="#earc"/></svg></button>
        <button aria-label="插入块"><svg class="ic"><use href="#insert"/></svg></button>
        <button aria-label="创建块"><svg class="ic"><use href="#mkblock"/></svg></button>
        <button aria-label="点"><svg class="ic"><use href="#point"/></svg></button>
        <button aria-label="图案填充"><svg class="ic"><use href="#hatch"/></svg></button>
        <button aria-label="渐变色"><svg class="ic"><use href="#gradient"/></svg></button>
        <button aria-label="面域"><svg class="ic"><use href="#region"/></svg></button>
        <button aria-label="表格"><svg class="ic"><use href="#table"/></svg></button>
        <button aria-label="多行文字"><svg class="ic"><use href="#mtext"/></svg></button>
        <button aria-label="添加选定对象"><svg class="ic"><use href="#addsel"/></svg></button>
        <button class="dock-close" aria-label="关闭"><svg><use href="#close"/></svg></button>
      </div>
    </div>
    <aside class="side">
      <div class="modify-bar">
        <i class="hgrip"></i>
        <button aria-label="删除"><svg class="ic"><use href="#erase"/></svg></button>
        <button aria-label="复制"><svg class="ic"><use href="#mcopy"/></svg></button>
        <button aria-label="镜像"><svg class="ic"><use href="#mirror"/></svg></button>
        <button aria-label="偏移"><svg class="ic"><use href="#offset"/></svg></button>
        <button aria-label="阵列"><svg class="ic"><use href="#array"/></svg></button>
        <button aria-label="移动"><svg class="ic"><use href="#move"/></svg></button>
        <button aria-label="旋转"><svg class="ic"><use href="#rotate"/></svg></button>
        <button aria-label="缩放"><svg class="ic"><use href="#scale"/></svg></button>
        <button aria-label="拉伸"><svg class="ic"><use href="#stretch"/></svg></button>
        <button aria-label="修剪"><svg class="ic"><use href="#trim"/></svg></button>
        <button aria-label="延伸"><svg class="ic"><use href="#extend"/></svg></button>
        <button aria-label="打断于点"><svg class="ic"><use href="#brkpt"/></svg></button>
        <button aria-label="打断"><svg class="ic"><use href="#brk"/></svg></button>
        <button aria-label="合并"><svg class="ic"><use href="#join"/></svg></button>
        <button aria-label="倒角"><svg class="ic"><use href="#chamfer"/></svg></button>
        <button aria-label="圆角"><svg class="ic"><use href="#fillet"/></svg></button>
        <button aria-label="光顺曲线"><svg class="ic"><use href="#blend"/></svg></button>
        <button aria-label="分解"><svg class="ic"><use href="#explode"/></svg></button>
      </div>
    </aside>
  </main>

  <section class="command">
    <div class="command-rail">
      <i class="dots"></i>
      <button aria-label="关闭命令行"><svg><use href="#close"/></svg></button>
      <button aria-label="自定义命令行"><svg class="wr"><use href="#wrench"/></svg></button>
    </div>
    <div class="command-main">
      <div class="history"><p>命令:</p><p>命令:&nbsp; *取消*</p><p>命令:</p></div>
      <div class="prompt">
        <svg class="pi"><use href="#prompt"/></svg><svg class="tiny gray"><use href="#caret"/></svg>
        <input type="text" placeholder="键入命令" aria-label="键入命令">
      </div>
    </div>
  </section>

  <footer class="status">
    <div class="layouts">
      <button class="active">模型</button><button>布局1</button><button>布局2</button><button class="plus" aria-label="新建布局"><svg class="ic"><use href="#plus"/></svg></button>
    </div>
    <div class="status-tools">
      <div class="cell"><button class="model">模型</button></div>
      <div class="cell w-grid"><button aria-label="栅格"><svg class="ic"><use href="#grid1"/></svg></button><button aria-label="捕捉"><svg class="ic"><use href="#grid2"/></svg></button><svg class="tiny"><use href="#caret"/></svg></div>
      <div class="cell w-track"><button aria-label="正交"><svg class="ic"><use href="#ortho"/></svg></button><button aria-label="极轴"><svg class="ic"><use href="#polar"/></svg></button><svg class="tiny"><use href="#caret"/></svg><button aria-label="等轴测"><svg class="ic"><use href="#iso"/></svg></button><svg class="tiny"><use href="#caret"/></svg></div>
      <div class="cell w-grid"><button aria-label="对象追踪"><svg class="ic"><use href="#otrack"/></svg></button><button aria-label="对象捕捉"><svg class="ic"><use href="#osnap"/></svg></button><svg class="tiny"><use href="#caret"/></svg></div>
      <div class="cell w-scale"><button aria-label="注释可见性"><svg class="ic"><use href="#ann1"/></svg></button><button aria-label="自动缩放"><svg class="ic"><use href="#ann2"/></svg></button><button class="ratio"><svg class="ic"><use href="#ann3"/></svg>1:1</button><svg class="tiny"><use href="#caret"/></svg></div>
      <div class="cell w-gear"><button aria-label="切换工作空间"><svg class="ic"><use href="#gear"/></svg></button><svg class="tiny"><use href="#caret"/></svg></div>
      <div class="cell one"><button aria-label="注释监视器"><svg class="ic"><use href="#bigplus"/></svg></button></div>
      <div class="cell one"><button aria-label="隔离对象"><svg class="ic"><use href="#monitor"/></svg></button></div>
      <div class="cell one lit"><button aria-label="硬件加速"><svg class="ic"><use href="#perf"/></svg></button></div>
      <div class="cell one"><button aria-label="全屏显示"><svg class="ic"><use href="#full"/></svg></button></div>
      <div class="cell one"><button aria-label="自定义"><svg class="ic"><use href="#menu"/></svg></button></div>
    </div>
  </footer>
</div>
</body>
</html>
```
FILE: styles.css
```css
* { box-sizing: border-box; }
html, body { height: 100%; margin: 0; }
body {
  background: #5a5a5a;
  color: #e6e6e6;
  font-family: "Liberation Serif", "Noto Sans CJK SC", serif;
  font-size: 11px;
  line-height: 14px;
  overflow: hidden;
}
button {
  display: flex;
  align-items: center;
  justify-content: center;
  flex: none;
  margin: 0;
  padding: 0;
  border: 0;
  background: none;
  color: inherit;
  font: inherit;
  white-space: nowrap;
}
svg { display: block; flex: none; }
.sprite { position: absolute; width: 0; height: 0; }
.ic { width: 16px; height: 16px; opacity: .9; }
.tiny { width: 8px; height: 8px; color: #eee; }
.tiny.dark { color: #333; }
.tiny.dim { color: #888; }
.tiny.gray { color: #888; }
.tiny.expand { transform: rotate(-90deg); }

.app { display: flex; flex-direction: column; height: 100vh; }

.header {
  position: relative;
  display: flex;
  height: 32px;
  flex: none;
  background: linear-gradient(#9c9c9c, #7c7c7c 45%, #5c5c5c);
}
.app-button {
  width: 29px;
  height: 30px;
  align-items: flex-start;
  background: linear-gradient(#b4b4b4, #858585);
  border-right: 1px solid #222;
  border-bottom: 1px solid #222;
}
.logo { width: 20px; height: 22px; }
.app-button .tiny { margin-top: 9px; }
.header-rows { flex: 1; min-width: 0; }
.title-row { display: flex; align-items: center; height: 11px; }
.qat { display: flex; align-items: center; gap: 4px; width: 400px; padding-left: 5px; flex: none; }
.qat .tiny { margin: 0 -2px; }
.title {
  display: flex;
  gap: 23px;
  flex: 1;
  margin: 0;
  font-size: 11px;
  font-weight: bold;
  line-height: 12px;
  white-space: nowrap;
}
.search {
  width: 144px;
  height: 18px;
  margin: 0 3px 0 2px;
  padding: 0 3px;
  border: 1px solid #505050;
  background: #777;
  color: #ddd;
  font: italic 10px/14px "Noto Sans CJK SC", sans-serif;
}
.search::placeholder { color: #c0c0c0; }
.account { display: flex; gap: 2px; width: 104px; }
.login { gap: 3px; }
.services { display: flex; align-items: center; gap: 3px; margin-right: 12px; }
.win { display: flex; margin-left: auto; gap: 1px; padding-right: 3px; color: #333; }
.win svg { width: 12px; height: 12px; }
.menu-row { display: flex; align-items: center; height: 14px; margin-top: 6px; }
.menu-row > button { width: 50px; padding-left: 2px; }
.banner {
  position: absolute;
  right: 36px;
  top: 22px;
  z-index: 2;
  width: 190px;
  height: 52px;
  background: #fcfcfc;
  color: #080808;
  font: 700 30px/46px "Noto Sans CJK SC", sans-serif;
  text-align: center;
  white-space: nowrap;
}

.file-tabs {
  display: flex;
  align-items: flex-end;
  height: 21px;
  flex: none;
  padding-left: 10px;
  background: #393939;
}
.file-tab {
  height: 18px;
  width: 102px;
  justify-content: flex-start;
  padding-left: 11px;
  background: #505050;
  color: #bbb;
  font-size: 10px;
  clip-path: polygon(6px 0, 96px 0, 100% 100%, 0 100%);
}
.file-tab.active {
  width: 104px;
  padding-left: 9px;
  background: linear-gradient(#7e7e7e, #5c5c5c);
  color: #fff;
  font-weight: bold;
}
.tabx { width: 10px; height: 10px; margin-left: auto; margin-right: 12px; color: #555; }
.add-tab { width: 22px; height: 16px; background: #4a4a4a; color: #ccc; border-radius: 4px; }

.toolbars {
  height: 48px;
  flex: none;
  padding: 3px 0 2px;
  border-top: 1px solid #707070;
  background: #5a5a5a;
  display: grid;
  grid-template-rows: 21px 20px;
  row-gap: 1px;
}
.bar { display: flex; align-items: center; padding-left: 4px; background: #555; min-width: 0; }
.tools { display: flex; align-items: center; gap: 2px; flex: none; }
.tools .sep { width: 1px; height: 16px; margin: 0 2px; background: #bbb; }
.standard { width: 511px; }
.grip { width: 4px; height: 14px; flex: none; margin: 0 4px; border-left: 1px solid #333; border-right: 1px solid #333; }
.combo {
  display: flex;
  align-items: center;
  height: 17px;
  flex: none;
  background: #fff;
  color: #111;
  border: 1px solid #ddd;
}
.combo select {
  appearance: none;
  flex: 1;
  min-width: 0;
  height: 14px;
  margin: 0;
  padding: 0 4px;
  border: 0;
  background: none;
  color: #111;
  font: inherit;
  line-height: 14px;
}
.bylayer select { padding: 0 2px; font-size: 10px; }
.arrow {
  display: flex;
  align-items: center;
  justify-content: center;
  width: 12px;
  height: 14px;
  background: #ccc;
  border: 1px solid;
  border-color: #eee #555 #555 #eee;
  color: #000;
}
.arrow svg { width: 7px; height: 7px; }
.mini { width: 12px; height: 14px; margin-left: 1px; }
.space { width: 139px; margin-right: 3px; }
.color { width: 120px; margin-right: 6px; margin-left: -1px; }
.ltype { width: 128px; margin-right: 6px; }
.lweight { width: 101px; margin-right: 5px; }
.plot { width: 96px; }
.rule { width: 48px; height: 1px; margin-left: 3px; background: #333; }
.rule.short { width: 28px; }
.layer { width: 240px; margin: 0 2px 0 3px; }
.current { gap: 3px; }
.layers2 { width: 181px; justify-content: space-between; margin-left: 2px; }
.dims { margin-left: 1px; }
.dimstyle { width: 96px; margin: 0 2px 0 10px; }

.workspace { display: flex; flex: 1; min-height: 0; }
.canvas { position: relative; flex: 1; min-width: 0; background: #000; overflow: hidden; }
.drawing { position: absolute; left: 0; top: 0; }
.draw-bar {
  position: absolute;
  left: 28px;
  top: 9px;
  display: flex;
  align-items: center;
  justify-content: space-between;
  width: 385px;
  height: 18px;
  background: #555;
  border: 1px solid #666;
}
.draw-bar .grip { width: 3px; height: 12px; margin: 0 0 0 2px; }
.dock-close { align-self: flex-start; width: 7px; color: #ccc; }
.dock-close svg { width: 7px; height: 8px; }
.side { width: 27px; flex: none; padding: 0 3px; background: #5c5c5c; }
.modify-bar {
  display: flex;
  flex-direction: column;
  align-items: center;
  gap: 2px;
  padding: 3px 0 2px;
  background: #535353;
  border: 1px solid #444;
}
.hgrip { width: 12px; height: 3px; border-top: 1px dashed #222; border-bottom: 1px dashed #222; }

.command { display: flex; height: 71px; flex: none; border-top: 2px solid #6a6464; }
.command-rail {
  display: flex;
  flex-direction: column;
  align-items: center;
  gap: 4px;
  width: 14px;
  flex: none;
  padding-top: 4px;
  background: linear-gradient(#777, #4c484c);
  color: #eee;
}
.dots { width: 12px; height: 4px; border-top: 1px dotted #bbb; border-bottom: 1px dotted #bbb; }
.command-rail svg { width: 12px; height: 12px; }
.command-rail .wr { width: 14px; height: 14px; }
.command-main { display: flex; flex-direction: column; flex: 1; margin-right: 1px; }
.history { flex: 1; padding: 11px 2px 0; background: #c6c6c6; color: #222; border-bottom: 1px solid #999; }
.history p { margin: 0; line-height: 12px; }
.prompt { display: flex; align-items: center; height: 18px; padding-left: 5px; background: #fff; }
.pi { width: 12px; height: 12px; }
.prompt .tiny { width: 7px; margin-left: 2px; }
.prompt input { flex: 1; height: 16px; margin: 0; padding: 0 5px; border: 0; background: none; font: inherit; font-size: 10px; }
.prompt input::placeholder { color: #999; }

.status { display: flex; justify-content: space-between; height: 24px; flex: none; background: #393939; border-bottom: 2px solid #555; }
.layouts { display: flex; padding-left: 4px; }
.layouts button {
  width: 43px;
  height: 15px;
  background: #4e4e4e;
  color: #aaa;
  font-size: 10px;
  clip-path: polygon(0 0, 100% 0, 37px 100%, 6px 100%);
}
.layouts .active { width: 40px; background: #7a7a7a; color: #fff; font-weight: bold; clip-path: polygon(0 0, 100% 0, 34px 100%, 6px 100%); }
.layouts .plus { width: 22px; color: #ddd; }
.status-tools { display: flex; height: 22px; background: #525252; }
.cell {
  display: flex;
  align-items: center;
  justify-content: space-between;
  padding: 0 2px;
  border-left: 1px solid #707070;
}
.cell .model { font-size: 10px; font-weight: bold; }
.w-grid { width: 52px; }
.w-track { width: 84px; }
.w-scale { width: 92px; }
.w-gear { width: 32px; }
.one { width: 22px; justify-content: center; }
.lit { background: #3c5068; }
.ratio { gap: 3px; font-family: "Noto Sans", sans-serif; font-size: 10px; }
```
